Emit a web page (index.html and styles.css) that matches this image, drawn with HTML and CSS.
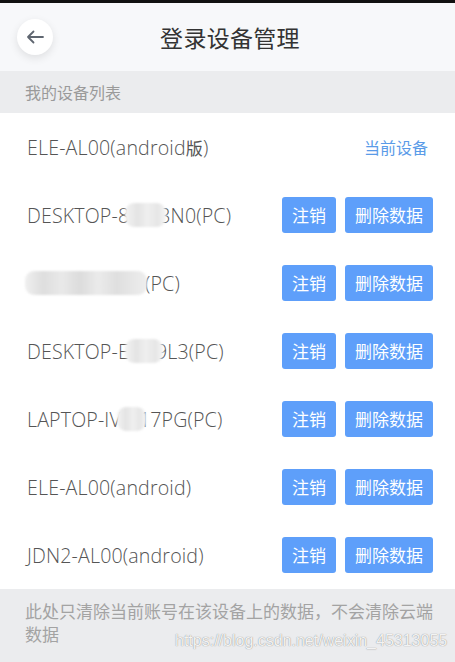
FILE: index.html
```html
<!DOCTYPE html>
<html lang="zh-CN">
<head>
<meta charset="utf-8">
<title>登录设备管理</title>
<link rel="stylesheet" href="styles.css">
</head>
<body>
<div class="page">
  <div class="topbar"></div>
  <header class="header">
    <button class="back" aria-label="返回">
      <svg width="18" height="14" viewBox="0 0 18 14"><path d="M17 7H2M7.5 1.5L2 7l5.5 5.5" fill="none" stroke="#5f6670" stroke-width="1.8" stroke-linecap="round" stroke-linejoin="round"/></svg>
    </button>
    <h1 class="title">登录设备管理</h1>
  </header>
  <div class="section">我的设备列表</div>
  <ul class="list">
    <li class="row">
      <span class="name">ELE-AL00(android<span class="cjk">版</span>)</span>
      <span class="current">当前设备</span>
    </li>
    <li class="row">
      <span class="name">DESKTOP-8<span class="mosaic m1"></span>3N0(PC)</span>
      <span class="actions"><button class="btn">注销</button><button class="btn">删除数据</button></span>
    </li>
    <li class="row">
      <span class="name name-hidden"><span class="mosaic m2"></span>(PC)</span>
      <span class="actions"><button class="btn">注销</button><button class="btn">删除数据</button></span>
    </li>
    <li class="row">
      <span class="name">DESKTOP-E<span class="mosaic m3"></span>9L3(PC)</span>
      <span class="actions"><button class="btn">注销</button><button class="btn">删除数据</button></span>
    </li>
    <li class="row">
      <span class="name">LAPTOP-IV<span class="mosaic m4"></span>17PG(PC)</span>
      <span class="actions"><button class="btn">注销</button><button class="btn">删除数据</button></span>
    </li>
    <li class="row">
      <span class="name">ELE-AL00(android)</span>
      <span class="actions"><button class="btn">注销</button><button class="btn">删除数据</button></span>
    </li>
    <li class="row">
      <span class="name">JDN2-AL00(android)</span>
      <span class="actions"><button class="btn">注销</button><button class="btn">删除数据</button></span>
    </li>
  </ul>
  <footer class="footer">
    <p class="note"><span>此处只清除当前账号在该设备上的数据，不会清除云端</span><span>数据</span></p>
    <span class="watermark">https://blog.csdn.net/weixin_45313055</span>
  </footer>
</div>
</body>
</html>
```

FILE: styles.css
```css
* { box-sizing: border-box; }
html, body { margin: 0; padding: 0; background: #ffffff; }
body {
  font-family: "Noto Sans CJK SC", "Noto Sans", sans-serif;
  color: #555;
}
.page {
  width: 455px;
  height: 662px;
  display: flex;
  flex-direction: column;
  overflow: hidden;
}
.topbar { height: 3px; background: #111; flex: none; }
.header {
  height: 68px;
  flex: none;
  background: #f7f8fa;
  display: flex;
  align-items: center;
  justify-content: center;
  position: relative;
}
.back {
  position: absolute;
  left: 17px;
  top: 16px;
  width: 36px;
  height: 36px;
  border-radius: 50%;
  border: none;
  background: #fff;
  box-shadow: 0 3px 8px rgba(0,0,0,0.10);
  display: flex;
  align-items: center;
  justify-content: center;
  padding: 0;
}
.title {
  margin: 0 0 0 5px;
  font-size: 23px;
  font-weight: 400;
  color: #333;
  letter-spacing: 0.3px;
}
.section {
  height: 42px;
  flex: none;
  background: #ebecee;
  color: #9a9a9a;
  font-size: 16px;
  display: flex;
  align-items: center;
  padding-left: 25px;
}
.list { list-style: none; margin: 0; padding: 0; flex: none; }
.row {
  height: 68px;
  display: flex;
  align-items: center;
  justify-content: space-between;
  padding: 0 22px 0 27px;
}
.name {
  font-family: "Open Sans", "Noto Sans CJK SC", sans-serif;
  font-size: 19.6px;
  font-weight: 300;
  letter-spacing: 0.15px;
  color: #555;
  display: flex;
  align-items: center;
}
.cjk {
  font-family: "Noto Sans CJK SC", sans-serif;
  font-size: 17px;
  font-weight: 400;
}
.name-hidden { margin-left: -2px; }
.mosaic {
  position: relative;
  z-index: 1;
  display: inline-block;
  height: 24px;
  border-radius: 9px;
  background: linear-gradient(90deg, #f3f3f3, #e4e4e4 30%, #efefef 55%, #e6e6e6 80%, #f5f5f5);
  filter: blur(1.2px);
  margin: 0 -7px 0 -4px;
}
.m1 { width: 41px; }
.m2 { width: 122px; margin: 0 -2px 0 0; background: linear-gradient(90deg, #f0f0f0, #dedede 15%, #e9e9e9 30%, #dcdcdc 45%, #ebebeb 60%, #dfdfdf 75%, #eeeeee); }
.m3 { width: 38px; }
.m4 { width: 29px; }
.current {
  font-size: 16px;
  color: #5a9be8;
  margin-right: 5px;
}
.actions { display: flex; gap: 9px; }
.btn {
  height: 36px;
  padding: 0 10px;
  border: none;
  border-radius: 3px;
  background: #5e9ffa;
  color: #fff;
  font-family: "Noto Sans CJK SC", "Noto Sans", sans-serif;
  font-size: 17px;
  line-height: 36px;
}
.footer {
  flex: 1;
  background: #ebecee;
  position: relative;
  padding: 10px 20px 0 25px;
}
.note {
  margin: 0;
  font-size: 17px;
  line-height: 23px;
  color: #a3a3a3;
  display: flex;
  flex-direction: column;
  align-items: flex-start;
}
.watermark {
  position: absolute;
  left: 175px;
  top: 43px;
  font-family: "Liberation Sans", Arial, sans-serif;
  font-size: 16px;
  color: rgba(255,255,255,0.92);
  text-shadow: 0 0 1px rgba(80,80,80,0.8);
  white-space: nowrap;
}
```
